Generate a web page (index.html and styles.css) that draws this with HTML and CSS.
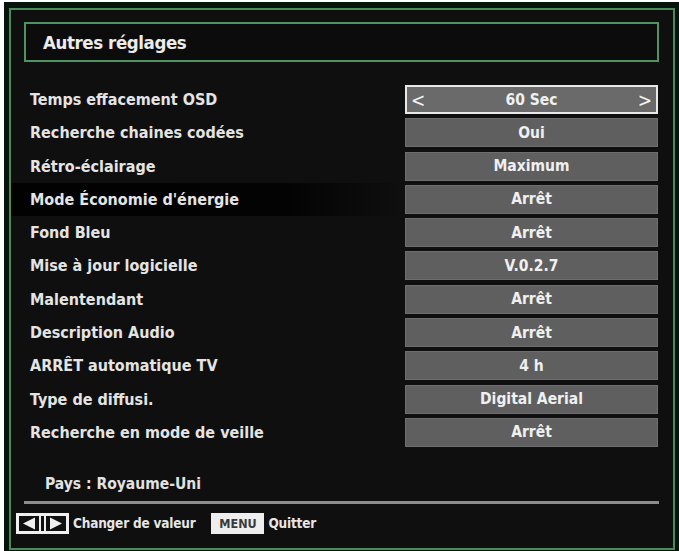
FILE: index.html
```html
<!DOCTYPE html>
<html lang="fr">
<head>
<meta charset="utf-8">
<title>Autres réglages</title>
<link rel="stylesheet" href="styles.css">
</head>
<body>
<div class="screen">
  <div class="frame">
    <div class="title-box"><h1 class="title">Autres réglages</h1></div>
    <div class="rows">
      <div class="label">Temps effacement OSD</div>
      <div class="value selected"><span class="arrow">&lt;</span><span>60 Sec</span><span class="arrow">&gt;</span></div>
      <div class="label">Recherche chaines codées</div>
      <div class="value">Oui</div>
      <div class="label">Rétro-éclairage</div>
      <div class="value">Maximum</div>
      <div class="label band">Mode Économie d'énergie</div>
      <div class="value">Arrêt</div>
      <div class="label">Fond Bleu</div>
      <div class="value">Arrêt</div>
      <div class="label">Mise à jour logicielle</div>
      <div class="value">V.0.2.7</div>
      <div class="label">Malentendant</div>
      <div class="value">Arrêt</div>
      <div class="label">Description Audio</div>
      <div class="value">Arrêt</div>
      <div class="label">ARRÊT automatique TV</div>
      <div class="value">4 h</div>
      <div class="label">Type de diffusi.</div>
      <div class="value">Digital Aerial</div>
      <div class="label">Recherche en mode de veille</div>
      <div class="value">Arrêt</div>
    </div>
    <div class="country">Pays : Royaume-Uni</div>
    <div class="sep"></div>
    <div class="footer">
      <svg class="nav-icon" width="53" height="21" viewBox="0 0 53 21">
        <rect x="0" y="0" width="53" height="21" fill="#f0f0f0"/>
        <rect x="3" y="3" width="20" height="15" fill="#111"/>
        <rect x="30" y="3" width="20" height="15" fill="#111"/>
        <rect x="25" y="3" width="3" height="15" fill="#111"/>
        <polygon points="7,10.5 19,4.5 19,16.5" fill="#f0f0f0"/>
        <polygon points="46,10.5 34,4.5 34,16.5" fill="#f0f0f0"/>
      </svg>
      <span class="hint">Changer de valeur</span>
      <span class="menu-key">MENU</span>
      <span class="hint">Quitter</span>
    </div>
  </div>
</div>
</body>
</html>
```

FILE: styles.css
```css
html, body {
  margin: 0;
  padding: 0;
  background: #ffffff;
}

body {
  font-family: "DejaVu Sans", sans-serif;
  font-stretch: condensed;
  font-weight: bold;
  color: #e6e6e6;
}

.screen {
  margin: 2px 0 0 4px;
  width: 675px;
  height: 549px;
  box-sizing: border-box;
  background: #07140b;
  padding: 6px 4px 1px 5px;
}

.frame {
  height: 100%;
  box-sizing: border-box;
  border: 2px solid #4a8a5b;
  background: #0f0f0f;
  display: flex;
  flex-direction: column;
}

.title-box {
  margin: 12px 14px 0 13px;
  height: 40px;
  box-sizing: border-box;
  border: 2px solid #4f9363;
  background: #0c0c0c;
  display: flex;
  align-items: center;
  padding-left: 17px;
}

.title {
  margin: 0;
  font-size: 18.5px;
  letter-spacing: -0.4px;
  font-weight: bold;
  color: #ececec;
}

.rows {
  margin: 23px 15px 0 0;
  display: grid;
  grid-template-columns: 1fr 253px;
  grid-auto-rows: 29px;
  row-gap: 4.3px;
}

.label {
  display: flex;
  align-items: center;
  padding-left: 19px;
  font-size: 16px;
  color: #e4e4e4;
  white-space: nowrap;
}

.label.band {
  margin-top: -2px;
  margin-bottom: -2px;
  background: linear-gradient(to right, #020202 0%, #030303 70%, rgba(3,3,3,0) 100%);
}

.value {
  box-sizing: border-box;
  background: #5f5f5f;
  border: 1px solid #6e6e6e;
  display: flex;
  align-items: center;
  justify-content: center;
  font-size: 15.5px;
  color: #f0f0f0;
}

.value.selected {
  border: 2px solid #e8e8e8;
  background: #6a6a6a;
  justify-content: space-between;
  padding: 0 4px;
}

.arrow {
  font-size: 19px;
  font-weight: normal;
  color: #f4f4f4;
}

.country {
  margin-top: 28px;
  padding-left: 34px;
  font-size: 15.5px;
  color: #e2e2e2;
}

.sep {
  margin: 8px 14px 0 13px;
  height: 3px;
  background: #8c8c8c;
}

.footer {
  margin-top: 9px;
  padding-left: 5px;
  display: flex;
  align-items: center;
  gap: 4px;
}

.nav-icon {
  display: block;
}

.hint {
  font-size: 13.5px;
  letter-spacing: -0.2px;
  color: #e6e6e6;
}

.menu-key {
  margin-left: 12px;
  box-sizing: border-box;
  height: 21px;
  width: 53px;
  border: 2px solid #eeeeee;
  background: #eeeeee;
  color: #3a3a3a;
  font-size: 12.5px;
  display: flex;
  align-items: center;
  justify-content: center;
}
```
